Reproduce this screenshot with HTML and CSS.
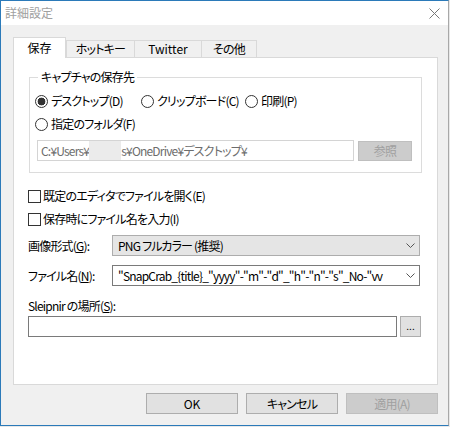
FILE: index.html
```html
<!DOCTYPE html>
<html lang="ja">
<head>
<meta charset="utf-8">
<title>詳細設定</title>
<link rel="stylesheet" href="styles.css">
</head>
<body>
<div class="window">
  <div class="titlebar">
    <span class="title">詳細設定</span>
    <svg class="close" width="11" height="11" viewBox="0 0 11 11"><path d="M0.5 0.5L10.5 10.5M10.5 0.5L0.5 10.5" stroke="#777" stroke-width="1" fill="none"/></svg>
  </div>
  <div class="client">
    <div class="tabs">
      <div class="tab selected">保存</div>
      <div class="tab first">ホットキー</div>
      <div class="tab w-twitter latin">Twitter</div>
      <div class="tab w-other">その他</div>
    </div>
    <div class="panel">
      <fieldset class="group">
        <legend>キャプチャの保存先</legend>
        <div class="radio-row">
          <label class="opt"><span class="radio checked"></span>デスクトップ(D)</label>
          <label class="opt"><span class="radio"></span>クリップボード(C)</label>
          <label class="opt"><span class="radio"></span>印刷(P)</label>
        </div>
        <div class="radio-row second">
          <label class="opt"><span class="radio"></span>指定のフォルダ(F)</label>
        </div>
        <div class="path-row">
          <div class="path">C:¥Users¥<span class="redact"></span>s¥OneDrive¥デスクトップ¥</div>
          <div class="btn disabled small">参照</div>
        </div>
      </fieldset>
      <label class="check-row first"><span class="check"></span>既定のエディタでファイルを開く(E)</label>
      <label class="check-row"><span class="check"></span>保存時にファイル名を入力(I)</label>
      <div class="form-row format">
        <span class="lbl">画像形式(<u>G</u>):</span>
        <div class="combo readonly"><span class="val">PNG フルカラー (推奨)</span><svg class="chev" width="9" height="5" viewBox="0 0 9 5"><path d="M0.5 0.5L4.5 4.5L8.5 0.5" stroke="#555" fill="none"/></svg></div>
      </div>
      <div class="form-row fname">
        <span class="lbl">ファイル名(<u>N</u>):</span>
        <div class="combo edit"><span class="val">"SnapCrab_{title}_"yyyy"-"m"-"d"_"h"-"n"-"s"_No-"vv</span><svg class="chev" width="9" height="5" viewBox="0 0 9 5"><path d="M0.5 0.5L4.5 4.5L8.5 0.5" stroke="#555" fill="none"/></svg></div>
      </div>
      <div class="slp-label">Sleipnir の場所(<u>S</u>):</div>
      <div class="slp-row">
        <div class="input"></div>
        <div class="btn dots">...</div>
      </div>
    </div>
    <div class="buttons">
      <div class="btn latin">OK</div>
      <div class="btn">キャンセル</div>
      <div class="btn disabled">適用(A)</div>
    </div>
  </div>
</div>
</body>
</html>
```

FILE: styles.css
```css
* { box-sizing: border-box; }

html, body {
  margin: 0;
  background: #e8e8e8;
}

body {
  font-family: "Noto Sans CJK JP", "Noto Sans", sans-serif;
  font-size: 12px;
  line-height: 16px;
  color: #000;
  font-feature-settings: "palt";
  letter-spacing: -0.8px;
}

.latin {
  letter-spacing: 0;
}

.window {
  width: 449px;
  height: 426px;
  border: 1px solid #2b7ab9;
  border-right-color: #a8a8a8;
  background: #f0f0f0;
  display: flex;
  flex-direction: column;
}

.titlebar {
  height: 24px;
  background: #fff;
  display: flex;
  align-items: center;
  justify-content: space-between;
  padding: 0 8px 0 4px;
  flex: none;
}

.title {
  color: #a0a0a0;
  letter-spacing: 0;
}

.client {
  flex: 1;
  padding: 12px 10px 0 12px;
  display: flex;
  flex-direction: column;
}

.tabs {
  display: flex;
  align-items: flex-end;
  height: 20px;
  flex: none;
}

.tab {
  height: 17px;
  border-top: 1px solid #d9d9d9;
  border-right: 1px solid #d9d9d9;
  background: #f0f0f0;
  text-align: center;
  white-space: nowrap;
}

.tab.first {
  border-left: 1px solid #d9d9d9;
  width: 69px;
}

.tab.w-twitter { width: 67px; }
.tab.w-other { width: 55px; }

.tab.selected {
  width: 53px;
  height: 21px;
  margin-bottom: -1px;
  padding-top: 2px;
  border-left: 1px solid #d9d9d9;
  background: #fff;
  position: relative;
  z-index: 1;
  letter-spacing: 0;
}

.panel {
  height: 328px;
  flex: none;
  border: 1px solid #d9d9d9;
  background: #fff;
  padding-top: 11px;
}

.group {
  margin: 0 15px;
  padding: 8px 5px 11px;
  border: 1px solid #dcdcdc;
  min-width: 0;
}

.group legend {
  padding: 0 3px;
  margin-left: 3px;
}

.radio-row {
  display: grid;
  grid-template-columns: 106px 104px auto;
  height: 16px;
}

.radio-row.second {
  margin-top: 7px;
}

.opt {
  display: flex;
  align-items: center;
  gap: 3px;
  white-space: nowrap;
}

.radio {
  width: 13px;
  height: 13px;
  border: 1px solid #333;
  border-radius: 50%;
  background: #fff;
  flex: none;
}

.radio.checked {
  background: radial-gradient(circle, #333 0 3.6px, #fff 4.2px);
}

.path-row {
  display: flex;
  gap: 4px;
  margin-top: 8px;
  padding-left: 2px;
}

.path {
  width: 317px;
  height: 21px;
  border: 1px solid #d4d4d4;
  background: #fff;
  color: #6d6d6d;
  padding: 0 3px;
  display: flex;
  align-items: center;
  white-space: nowrap;
}

.redact {
  display: inline-block;
  width: 32px;
  height: 19px;
  background: #ebebeb;
}

.btn {
  width: 92px;
  height: 21px;
  border: 1px solid #adadad;
  background: #e1e1e1;
  display: flex;
  align-items: center;
  justify-content: center;
  white-space: nowrap;
}

.btn.disabled {
  background: #cccccc;
  border-color: #bfbfbf;
  color: #a0a0a0;
}

.btn.small {
  width: 54px;
  height: 20px;
  margin-top: 1px;
}

.check-row {
  display: flex;
  align-items: center;
  gap: 2px;
  height: 16px;
  margin-top: 7px;
  padding-left: 14px;
  white-space: nowrap;
}

.check-row.first {
  margin-top: 15px;
}

.check {
  width: 13px;
  height: 13px;
  border: 1px solid #333;
  background: #fff;
  flex: none;
}

.form-row {
  display: flex;
  align-items: center;
  padding-left: 14px;
}

.form-row.format { margin-top: 8px; }
.form-row.fname { margin-top: 9px; }

.lbl {
  width: 84px;
  flex: none;
  white-space: nowrap;
}

.combo {
  width: 308px;
  height: 21px;
  display: flex;
  align-items: center;
  padding: 0 4px 0 5px;
  gap: 8px;
}

.combo.readonly {
  background: #e5e5e5;
  border: 1px solid #adadad;
}

.combo.edit {
  background: #fff;
  border: 1px solid #7a7a7a;
}

.combo .val {
  flex: 1;
  overflow: hidden;
  white-space: nowrap;
}

.chev {
  flex: none;
}

.slp-label {
  margin-top: 12px;
  padding-left: 14px;
}

.slp-row {
  display: flex;
  gap: 3px;
  margin-top: 2px;
  padding-left: 14px;
}

.input {
  width: 369px;
  height: 21px;
  border: 1px solid #7a7a7a;
  background: #fff;
}

.btn.dots {
  width: 21px;
  height: 21px;
  font-size: 10px;
  line-height: 10px;
  letter-spacing: 0;
  padding-bottom: 2px;
}

.buttons {
  display: flex;
  justify-content: flex-end;
  gap: 8px;
  margin-top: 8px;
}
```
